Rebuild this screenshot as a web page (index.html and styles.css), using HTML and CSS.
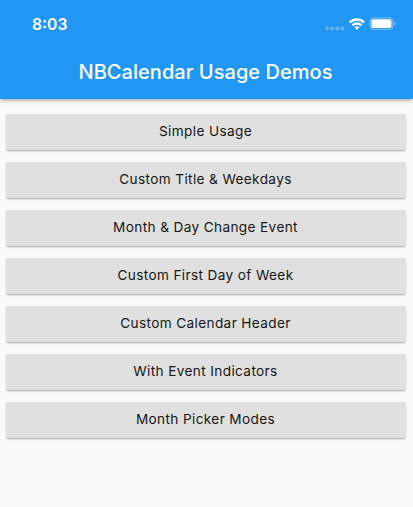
FILE: index.html
```html
<!DOCTYPE html>
<html lang="en">
<head>
<meta charset="utf-8">
<title>NBCalendar Usage Demos</title>
<link rel="stylesheet" href="styles.css">
</head>
<body>
<header class="app-bar">
  <div class="status">
    <span class="time">8:03</span>
    <div class="icons">
      <svg class="dots" width="20" height="5" viewBox="0 0 20 5"><circle cx="2.2" cy="2.5" r="1.9"/><circle cx="7.2" cy="2.5" r="1.9"/><circle cx="12.2" cy="2.5" r="1.9"/><circle cx="17.2" cy="2.5" r="1.9"/></svg>
      <svg class="wifi" width="16" height="12" viewBox="0.6 0 15.8 11.4" preserveAspectRatio="none"><path d="M8.5 2.500c2.300 0 4.500.9 6.100 2.400.1.1.3.1.4 0l1.200-1.200c.1-.1.1-.3 0-.5-4.300-4.100-11.100-4.100-15.400 0-.1.2-.1.4 0 .5L2 4.900c.1.1.3.1.4 0C4 3.400 6.200 2.500 8.500 2.500zM8.500 6.400c1.200 0 2.400.5 3.300 1.300.1.1.3.1.5 0l1.200-1.200c.1-.1.1-.3 0-.5-2.800-2.600-7.200-2.600-10 0-.1.2-.1.4 0 .5l1.200 1.200c.2.1.4.1.5 0 .9-.8 2.100-1.300 3.300-1.300zM10.800 9.100c.1-.1.1-.3 0-.5-1.300-1.100-3.300-1.100-4.600 0-.1.2-.1.400 0 .5l2.100 2.100c.1.1.3.1.4 0z"/></svg>
      <svg class="battery" width="27" height="13" viewBox="0 0 27 13"><rect class="shell" x="-.1" y=".8" width="23" height="11.600" rx="3.300"/><rect x="1.300" y="2.200" width="20.200" height="8.800" rx="2"/><path class="cap" d="M24.200 4.600v4c1.700-.8 1.700-3.200 0-4z"/></svg>
    </div>
  </div>
  <h1>NBCalendar Usage Demos</h1>
</header>
<main class="list">
  <button>Simple Usage</button>
  <button>Custom Title &amp; Weekdays</button>
  <button>Month &amp; Day Change Event</button>
  <button>Custom First Day of Week</button>
  <button>Custom Calendar Header</button>
  <button>With Event Indicators</button>
  <button>Month Picker Modes</button>
</main>
</body>
</html>
```
FILE: styles.css
```css
* { box-sizing: border-box; }
body { margin: 0; height: 507px; overflow: hidden; background: #fafafa; font-family: Inter, "Liberation Sans", sans-serif; }
.app-bar { height: 99px; background: #2196f3; color: #fff; box-shadow: 0 2px 3px -1px rgba(0,0,0,.2), 0 2px 4px rgba(0,0,0,.12), 0 1px 8px rgba(0,0,0,.07); }
.status { display: flex; justify-content: space-between; align-items: center; height: 48px; padding: 0 16px 0 32px; }
.time { padding-top: 2px; font-size: 15.7px; font-weight: 600; line-height: 20px; }
.icons { display: flex; align-items: center; gap: 4px; }
.icons svg { display: block; fill: #fff; overflow: visible; }
.icons .dots { opacity: .3; margin-top: 8px; }
.icons .battery { margin-left: 1px; margin-top: -1px; }
.battery .shell { fill: none; stroke: #fff; opacity: .4; }
.battery .cap { opacity: .45; }
h1 { margin: 11px 0 0; padding-right: 2px; text-align: center; font-size: 20px; font-weight: 500; line-height: 26px; letter-spacing: .04px; white-space: nowrap; }
.list { display: flex; flex-direction: column; gap: 12px; padding: 15px 7px 0 6px; }
button { display: block; height: 36px; width: 100%; padding: 0 1px 1px 0; border: 0; border-radius: 2px; background: #e0e0e0; color: #161616; font: 400 13.6px/35px Inter, sans-serif; letter-spacing: .38px; box-shadow: 0 2px 1px -1px rgba(0,0,0,.12), 0 1px 2px rgba(0,0,0,.16), 0 1px 3px rgba(0,0,0,.08); }
```
